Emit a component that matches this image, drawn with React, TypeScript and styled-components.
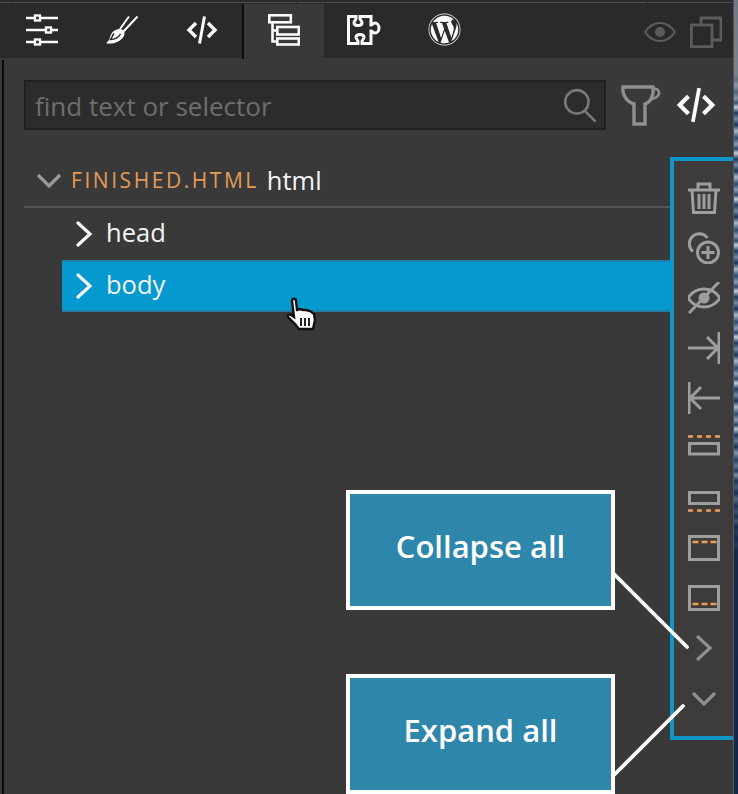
import * as React from 'react'
import styled, {createGlobalStyle} from 'styled-components'
import {FaWordpress} from 'react-icons/fa'

const GlobalStyle = createGlobalStyle`
  html, body {
    margin: 0;
    padding: 0;
    background: #393939;
    overflow: hidden;
  }
`

const Page = styled.div`
  position: relative;
  width: 738px;
  height: 794px;
  overflow: hidden;
  display: flex;
  background: #393939;
  font-family: "Open Sans", "Liberation Sans", sans-serif;
`
const Window = styled.div`
  width: 733px;
  flex: none;
  display: flex;
  flex-direction: column;
`

// Desktop picture showing past the window's right edge
const BackdropEdge = styled.div`
  flex: 1;
  box-sizing: border-box;
  border-left: 1px solid #565656;
  background:
    linear-gradient(180deg, #6f7884 0, #7a828c 70px, transparent 110px, transparent 420px, #14284a 560px, #12274a 100%),
    repeating-linear-gradient(180deg, #2c4a70 0, #8b9cb3 6px, #2a456b 11px, #c4cedb 15px, #1f3c60 21px, #7388a3 27px, #18345a 33px, #aab7c8 39px, #2c4a70 46px);
`

// Thin strip of the window chrome above the tabs
const TopStrip = styled.div`
  height: 4px;
  display: flex;
  background: #2a2a2a;
`
const TopSegment = styled.div<{$width: number}>`
  width: ${({$width}) => $width}px;
  height: 1px;
  margin-top: 2px;
  background: #4f4f4f;
  border-right: 1px solid #2a2a2a;
  box-sizing: border-box;
  flex: none;
`

const TabBar = styled.div`
  height: 54px;
  display: flex;
  align-items: stretch;
  padding-left: 2px;
  background: #2a2a2a;
`
const Tab = styled.div<{$active?: boolean}>`
  width: 80px;
  display: flex;
  align-items: center;
  justify-content: center;
  color: #fafafa;
  background: ${({$active}) => ($active ? '#393939' : 'transparent')};
  padding-bottom: 3px;
  box-sizing: border-box;
`
const TabDivider = styled.div`
  width: 2px;
  margin-bottom: -1px;
  background: #0c0c0c;
`
const TabActions = styled.div`
  margin-left: auto;
  display: flex;
  align-items: center;
  gap: 14px;
  padding-right: 11px;
  padding-top: 1px;
  color: #5c5c5c;
`

const Main = styled.div`
  flex: 1;
  display: flex;
  min-height: 0;
`
const LeftEdge = styled.div`
  width: 2px;
  margin-left: 2px;
  margin-top: 2px;
  background: #0c0c0c;
`
const Panel = styled.div`
  flex: 1;
  display: flex;
  flex-direction: column;
  min-width: 0;
`

const SearchRow = styled.div`
  display: flex;
  align-items: center;
  height: 50px;
  margin-top: 22px;
  padding-left: 20px;
`
const SearchBox = styled.div`
  width: 582px;
  height: 50px;
  box-sizing: border-box;
  display: flex;
  align-items: center;
  justify-content: space-between;
  padding: 0 8px 0 9px;
  background: #2c2c2c;
  border: 2px solid #212121;
  color: #7a7a7a;
`
const SearchText = styled.span`
  padding-top: 2px;
  font-size: 26px;
  color: #6e6e6e;
`
const SearchTools = styled.div`
  display: flex;
  align-items: center;
  gap: 15px;
  margin-left: 13px;
`
const CodeToggle = styled.span`
  display: flex;
  color: #fafafa;
`

const Content = styled.div`
  flex: 1;
  display: flex;
  min-height: 0;
`
const Tree = styled.div`
  flex: 1;
  padding-top: 25px;
  padding-left: 20px;
  min-width: 0;
`
const RootRow = styled.div`
  height: 50px;
  display: flex;
  align-items: center;
  padding-left: 12px;
  padding-bottom: 1px;
  border-bottom: 2px solid #555;
`
const FileName = styled.span`
  margin-left: 9px;
  font-size: 21px;
  letter-spacing: 2.55px;
  color: #e49b57;
`
const TagName = styled.span`
  display: block;
  padding-bottom: 5px;
  font-size: 25.5px;
  color: #f4f4f4;
  margin-left: 9px;
`
const RootTag = styled(TagName)`
  margin-left: 8px;
  padding-bottom: 0;
`
const NodeRow = styled.div<{$selected?: boolean}>`
  height: 52px;
  margin-left: 38px;
  box-sizing: border-box;
  display: flex;
  align-items: center;
  padding-left: 9px;
  border-top: 2px solid ${({$selected}) => ($selected ? '#1f7fa6' : 'transparent')};
  border-bottom: 2px solid ${({$selected}) => ($selected ? '#1f7fa6' : 'transparent')};
  background: ${({$selected}) => ($selected ? '#0499cf' : 'transparent')};
`

const Toolbar = styled.div`
  width: 63px;
  height: 583px;
  margin-top: 27px;
  box-sizing: border-box;
  padding-bottom: 13px;
  border-top: 4px solid #0d96c8;
  border-left: 4px solid #0d96c8;
  border-bottom: 4px solid #0d96c8;
  background: #3d3c3b;
  display: flex;
  flex-direction: column;
  align-items: center;
  justify-content: flex-end;
  color: #a09e9c;
`
const ToolSlot = styled.div`
  height: 50px;
  flex: none;
  display: flex;
  align-items: center;
  justify-content: center;
`

const Callout = styled.div<{$top: number}>`
  position: absolute;
  left: 346px;
  top: ${({$top}) => $top}px;
  width: 269px;
  height: 120px;
  box-sizing: border-box;
  border: 4px solid #fff;
  background: #2e86ab;
  display: flex;
  align-items: center;
  justify-content: center;
  padding-bottom: 8px;
  color: #fff;
  font-size: 31px;
  font-weight: 600;
`
const Leaders = styled.svg`
  position: absolute;
  inset: 0;
  pointer-events: none;
`
const HandCursor = styled.svg`
  position: absolute;
  left: 287px;
  top: 297px;
`

// Icons drawn to match the app's own set
const Line = (p: React.SVGProps<SVGSVGElement> & {size?: number}) => {
  const {size = 32, children, ...rest} = p
  return (
    <svg
      width={size}
      height={size}
      viewBox="0 0 32 32"
      fill="none"
      stroke="currentColor"
      strokeWidth={3}
      {...rest}
    >
      {children}
    </svg>
  )
}

const SlidersIcon = () => (
  <Line strokeWidth={2.4}>
    <path d="M0 4h8M15 4h17M0 16h19M26 16h6M0 28h8M15 28h17" />
    <rect x="9" y="1.500" width="5" height="5" />
    <rect x="20" y="13.500" width="5" height="5" />
    <rect x="9" y="25.500" width="5" height="5" />
  </Line>
)
const BrushIcon = () => (
  <Line strokeWidth={2}>
    <path d="M31.500 2.500 17 18M23 2.500 14 15" />
    <path d="M11 15.500c4-1.500 8 1 7.500 4.500-.8 5-7 9-13 9.500-2 .2-4.500.2-5.500-.2 3-2 3.500-5 4.500-7.500 1-3 3-5.500 6.500-6.300z" fill="currentColor" stroke="none" />
    <path d="M8 19.500c-1.500 2-2 4-3.500 6 3.500 0 8-2 10-5.500" stroke="#2a2a2a" strokeWidth={1.500} />
  </Line>
)
const CodeIcon = ({size = 32}: {size?: number}) => (
  <Line size={size}>
    <path d="M10 9 3 16l7 7M22 9l7 7-7 7" strokeWidth={3.4} />
    <path d="M18.500 2.500 13.500 29.500" strokeWidth={3} />
  </Line>
)
const TreeIcon = () => (
  <Line strokeWidth={2.6}>
    <rect x="1.300" y="1.300" width="21.500" height="7" />
    <rect x="9.300" y="13" width="21.500" height="7.500" />
    <rect x="9.300" y="24.500" width="21.500" height="6" />
    <path d="M4.500 8.500V27.500H9M4.500 16.500H9" />
  </Line>
)
const PuzzleIcon = () => (
  <svg width="34" height="30" viewBox="0 0 34 30" fill="none" stroke="currentColor" strokeWidth="3">
    <path d="M1.500 1.500H9v2c0 2-2 2-2 4s2 3 4 3 4-1 4-3-2-2-2-4v-2H24V10c1 0 2-2 4-2s4 2 4 5-2 5-4 5-3-2-4-2V28.500H15v-2c0-2 2-2 2-4s-2-3-4-3-4 1-4 3 2 2 2 4v2H1.500z" />
  </svg>
)
const EyeIcon = () => (
  <Line strokeWidth={2.2}>
    <path d="M1 16c4-6 9-9 15-9s11 3 15 9c-4 6-9 9-15 9S5 22 1 16z" />
    <circle cx="16" cy="16" r="5" fill="currentColor" stroke="none" />
  </Line>
)
const CopiesIcon = () => (
  <Line strokeWidth={2.8}>
    <path d="M11 9V2h20v22h-9" />
    <rect x="1.400" y="9" width="20.600" height="21.600" />
  </Line>
)
const SearchIcon = () => (
  <Line size={34} strokeWidth={2.4}>
    <circle cx="14" cy="13" r="11" />
    <path d="m21 21 11 11" />
  </Line>
)
const FunnelCupIcon = () => (
  <svg width="42" height="42" viewBox="0 0 42 42" fill="none" stroke="#8f8f8f" strokeWidth="3.400">
    <path d="M4 3h30c1 8-2 15-8 17v20H15V20C8 18 3 11 4 3z" />
    <path d="M34 5c4-1 6 1 6 4s-3 5-7 6" strokeWidth="2.600" />
  </svg>
)
const TrashIcon = () => (
  <Line>
    <path d="M0 8h32M10 7V2h12v5M4 8l1.500 22.500h21L28 8M11 12v15M16 12v15M21 12v15" />
  </Line>
)
const AddLayerIcon = () => (
  <Line>
    <path d="M5 19.500a10 10 0 1 1 14.500-13.500" />
    <circle cx="20" cy="20.500" r="10.500" />
    <path d="M20 14v13M13.500 20.500h13" />
  </Line>
)
const EyeOffIcon = () => (
  <Line>
    <path d="M0 16c4-6 9-9 16-9s12 3 16 9c-4 6-9 9-16 9S4 22 0 16z" />
    <circle cx="16" cy="16" r="5.500" fill="currentColor" stroke="none" />
    <path d="M31 0 1 31" />
  </Line>
)
const IndentIcon = () => (
  <Line>
    <path d="M0 16h30M19 5l11 11-11 11M31 0v32" />
  </Line>
)
const OutdentIcon = () => (
  <Line>
    <path d="M32 16H2M13 5 2 16l11 11M1 0v32" />
  </Line>
)
const PlaceIcon = ({dash}: {dash: 'above' | 'below' | 'top' | 'bottom'}) => {
  const inner = dash === 'top' || dash === 'bottom'
  const dashes = {above: 'M0 4.500h32', below: 'M0 28.500h32', top: 'M4.500 10h24', bottom: 'M4.500 22h24'}[dash]
  const frame =
    dash === 'above' ? <rect x="1.500" y="11.500" width="29" height="10.500" />
    : dash === 'below' ? <rect x="1.500" y="10.500" width="29" height="11" />
    : <rect x="1.500" y="4.500" width="29" height="23" />
  return (
    <Line>
      {frame}
      <path d={dashes} stroke="#eb9d5b" strokeWidth={2.600} strokeDasharray={inner ? '6 3' : '5 4'} />
    </Line>
  )
}
const ChevronRight = ({color = '#f8f8f8'}: {color?: string}) => (
  <svg width="26" height="26" viewBox="0 0 26 26" fill="none" stroke={color} strokeWidth="3.200" strokeLinecap="round">
    <path d="M7 2l12 11L7 24" />
  </svg>
)
const ChevronDown = ({color = '#9a9a9a'}: {color?: string}) => (
  <svg width="26" height="26" viewBox="0 0 26 26" fill="none" stroke={color} strokeWidth="3.200">
    <path d="M2 8l11 11L24 8" />
  </svg>
)

export default function App() {
  return (
    <Page>
      <GlobalStyle />
      <Window>
        <TopStrip>
          <TopSegment $width={13} />
          <TopSegment $width={153} />
          <TopSegment $width={131} />
          <TopSegment $width={85} />
          <TopSegment $width={88} />
          <TopSegment $width={178} />
          <TopSegment $width={85} />
        </TopStrip>
        <TabBar>
          <Tab><SlidersIcon /></Tab>
          <Tab><BrushIcon /></Tab>
          <Tab><CodeIcon /></Tab>
          <TabDivider />
          <Tab $active><TreeIcon /></Tab>
          <Tab><PuzzleIcon /></Tab>
          <Tab><FaWordpress size={33} /></Tab>
          <TabActions>
            <EyeIcon />
            <CopiesIcon />
          </TabActions>
        </TabBar>
        <Main>
          <LeftEdge />
          <Panel>
            <SearchRow>
              <SearchBox>
                <SearchText>find text or selector</SearchText>
                <SearchIcon />
              </SearchBox>
              <SearchTools>
                <FunnelCupIcon />
                <CodeToggle><CodeIcon size={40} /></CodeToggle>
              </SearchTools>
            </SearchRow>
            <Content>
              <Tree>
                <RootRow>
                  <ChevronDown />
                  <FileName>FINISHED.HTML</FileName>
                  <RootTag>html</RootTag>
                </RootRow>
                <NodeRow>
                  <ChevronRight />
                  <TagName>head</TagName>
                </NodeRow>
                <NodeRow $selected>
                  <ChevronRight />
                  <TagName>body</TagName>
                </NodeRow>
              </Tree>
              <Toolbar>
                <ToolSlot><TrashIcon /></ToolSlot>
                <ToolSlot><AddLayerIcon /></ToolSlot>
                <ToolSlot><EyeOffIcon /></ToolSlot>
                <ToolSlot><IndentIcon /></ToolSlot>
                <ToolSlot><OutdentIcon /></ToolSlot>
                <ToolSlot><PlaceIcon dash="above" /></ToolSlot>
                <ToolSlot><PlaceIcon dash="below" /></ToolSlot>
                <ToolSlot><PlaceIcon dash="top" /></ToolSlot>
                <ToolSlot><PlaceIcon dash="bottom" /></ToolSlot>
                <ToolSlot><ChevronRight color="#8f8f8f" /></ToolSlot>
                <ToolSlot><ChevronDown color="#8f8f8f" /></ToolSlot>
              </Toolbar>
            </Content>
          </Panel>
        </Main>
      </Window>
      <BackdropEdge />

      <Callout $top={490}>Collapse all</Callout>
      <Callout $top={674}>Expand all</Callout>
      <Leaders width="738" height="794" viewBox="0 0 738 794">
        <path d="M613 573 687 647M613 776 683 706" stroke="#fff" strokeWidth="3.800" strokeLinecap="round" />
      </Leaders>
      <HandCursor width="30" height="36" viewBox="0 0 30 36">
        <path
          d="M5 4c0-3 4-3 4 0l1 9 3-1 3 1 3 0 4 1 4 3 1 6-2 9H12l-4-5-7-7c-1-2 1-3 3-2l3 2z"
          fill="#fff"
          stroke="#111"
          strokeWidth="2.400"
        />
        <path d="M14 21v8M18 21v8M22 21v8" stroke="#222" strokeWidth="2" />
      </HandCursor>
    </Page>
  )
}
